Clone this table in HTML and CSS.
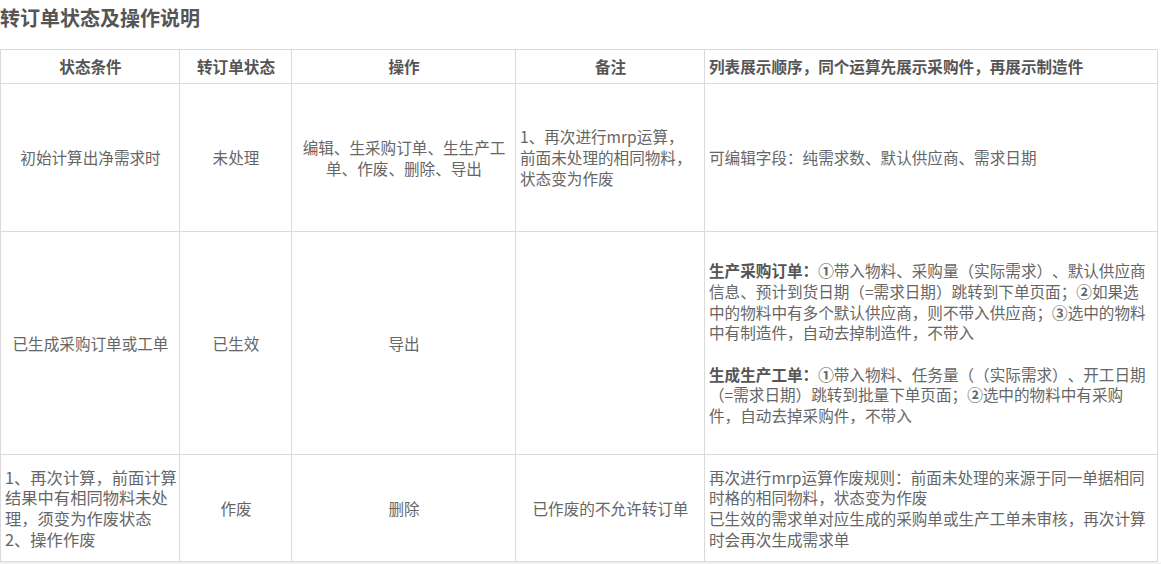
FILE: index.html
```html
<!DOCTYPE html>
<html lang="zh-CN">
<head>
<meta charset="utf-8">
<title>转订单状态及操作说明</title>
<link rel="stylesheet" href="styles.css">
</head>
<body>
<div class="page">
  <h1 class="title">转订单状态及操作说明</h1>
  <table class="grid">
    <colgroup>
      <col class="c1"><col class="c2"><col class="c3"><col class="c4"><col class="c5">
    </colgroup>
    <thead>
      <tr class="head">
        <th class="center">状态条件</th>
        <th class="center">转订单状态</th>
        <th class="center">操作</th>
        <th class="center">备注</th>
        <th class="left">列表展示顺序，同个运算先展示采购件，再展示制造件</th>
      </tr>
    </thead>
    <tbody>
      <tr class="row1">
        <td class="center">初始计算出净需求时</td>
        <td class="center">未处理</td>
        <td class="center">编辑、生采购订单、生生产工<br>单、作废、删除、导出</td>
        <td class="left">1、再次进行mrp运算，<br>前面未处理的相同物料，<br>状态变为作废</td>
        <td class="left">可编辑字段：纯需求数、默认供应商、需求日期</td>
      </tr>
      <tr class="row2">
        <td class="center">已生成采购订单或工单</td>
        <td class="center">已生效</td>
        <td class="center">导出</td>
        <td class="left"></td>
        <td class="left">
          <p class="para"><b class="label">生产采购订单：</b><span class="num">①</span>带入物料、采购量（实际需求）、默认供应商<br>信息、预计到货日期（=需求日期）跳转到下单页面；<span class="num">②</span>如果选<br>中的物料中有多个默认供应商，则不带入供应商；<span class="num">③</span>选中的物料<br>中有制造件，自动去掉制造件，不带入</p>
          <p class="para gap"><b class="label">生成生产工单：</b><span class="num">①</span>带入物料、任务量（（实际需求）、开工日期<br>（=需求日期）跳转到批量下单页面；<span class="num">②</span>选中的物料中有采购<br>件，自动去掉采购件，不带入</p>
        </td>
      </tr>
      <tr class="row3">
        <td class="left big">1、再次计算，前面计算<br>结果中有相同物料未处<br>理，须变为作废状态<br>2、操作作废</td>
        <td class="center">作废</td>
        <td class="center">删除</td>
        <td class="center">已作废的不允许转订单</td>
        <td class="left">再次进行mrp运算作废规则：前面未处理的来源于同一单据相同<br>时格的相同物料，状态变为作废<br>已生效的需求单对应生成的采购单或生产工单未审核，再次计算<br>时会再次生成需求单</td>
      </tr>
    </tbody>
  </table>
</div>
</body>
</html>
```

FILE: styles.css
```css
html {
  background: #f1f1f1;
}
body {
  margin: 0;
  font-family: "Noto Sans CJK SC", "Noto Sans", sans-serif;
  color: #666;
  text-spacing-trim: space-all;
}
.page {
  background: #fff;
  width: 1161px;
}
.title {
  margin: 0 0 13px 0;
  height: 36px;
  line-height: 36px;
  font-size: 20px;
  font-weight: bold;
  color: #555;
}
.grid {
  border-collapse: collapse;
  table-layout: fixed;
  width: 1157px;
}
.c1 { width: 179px; }
.c2 { width: 112px; }
.c3 { width: 224px; }
.c4 { width: 189px; }
.c5 { width: 453px; }
.grid th,
.grid td {
  border: 1px solid #dadada;
  padding: 0 3px 0 4px;
  font-size: 15.6px;
  line-height: 20.7px;
  vertical-align: middle;
  overflow: hidden;
}
.grid th {
  font-weight: bold;
  color: #555;
}
.center { text-align: center; }
.left { text-align: left; }
.head { height: 34px; }
.row1 { height: 148px; }
.row2 { height: 223px; }
.row3 { height: 107px; }
.grid td.big {
  font-size: 16.3px;
  padding: 0 0 0 4px;
  white-space: nowrap;
}
.para { margin: 0; }
.para.gap { margin-top: 20.7px; }
.label { color: #555; }
.num {
  display: inline-block;
  width: 1em;
  text-align: center;
  font-weight: bold;
  color: #666;
}
```
